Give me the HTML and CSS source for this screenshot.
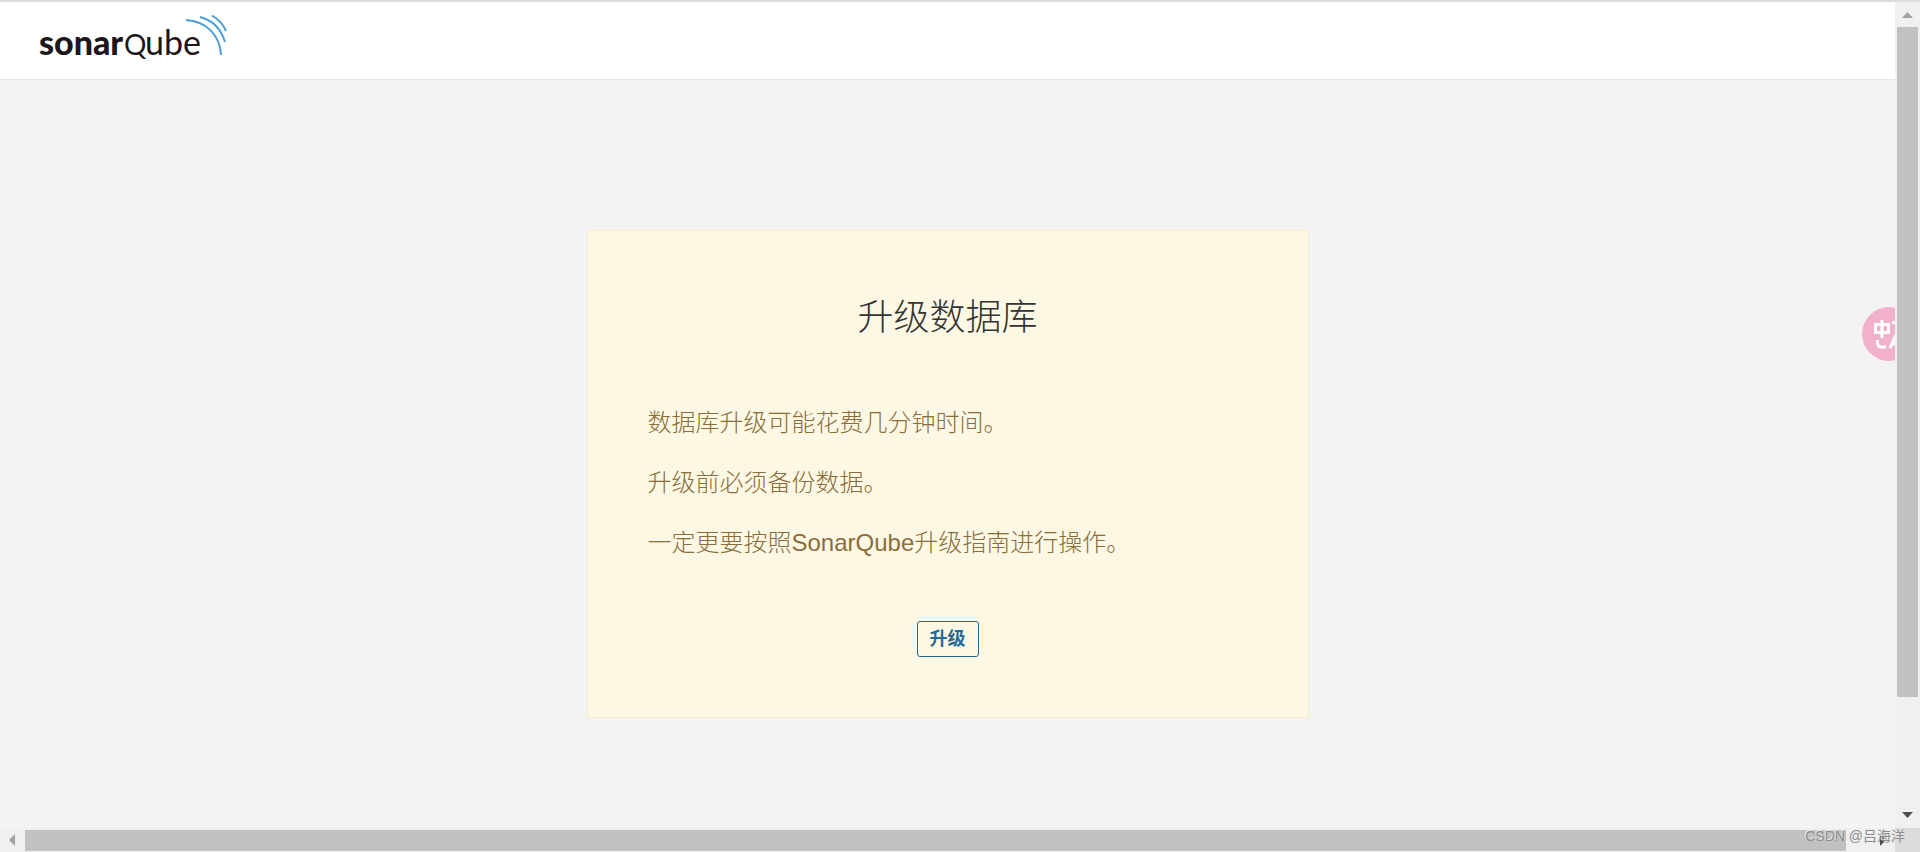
FILE: index.html
```html
<!DOCTYPE html>
<html lang="zh-CN">
<head>
<meta charset="utf-8">
<title>SonarQube</title>
<link rel="stylesheet" href="styles.css">
</head>
<body>
<div class="shell">
  <div class="viewport">
    <header class="navbar">
      <a class="brand" href="#" aria-label="SonarQube">
        <svg class="logo" width="190" height="50" viewBox="0 0 190 50">
          <text class="logo-bold" x="0" y="41">sonar</text>
          <text class="logo-q" x="85" y="41">Q</text>
          <text class="logo-thin" x="106" y="41">ube</text>
          <g class="logo-waves">
            <path d="M147 6C167 7 181 21 182 41"/>
            <path d="M161 3C173 6 182 15 186 28"/>
            <path d="M173 1.500C179 5 184 10 187 17"/>
          </g>
        </svg>
      </a>
    </header>
    <main class="content">
      <section class="notice">
        <h1 class="notice-title">升级数据库</h1>
        <div class="notice-body">
          <p>数据库升级可能花费几分钟时间。</p>
          <p>升级前必须备份数据。</p>
          <p>一定更要按照SonarQube升级指南进行操作。</p>
        </div>
        <button class="button" type="button">升级</button>
      </section>
    </main>
    <button class="translate" type="button" aria-label="翻译">
      <svg width="54" height="54" viewBox="0 0 54 54">
        <g fill="none" stroke="#fff" stroke-width="3">
          <path d="M13.500 17.500H26.500V25.500H13.500ZM20 13V31"/>
          <path d="M15.500 33V36Q15.500 40 20 40H24"/>
          <path d="M28 41L34 28L40 41M30 37H38M30 15.500H37V22"/>
        </g>
      </svg>
    </button>
  </div>
  <div class="bar bar-y">
    <svg class="arrow" width="25" height="25" viewBox="0 0 25 25"><path fill="#a3a3a3" d="M12.500 10L18 16H7Z"/></svg>
    <div class="track-y"><div class="thumb-y"></div></div>
    <svg class="arrow" width="25" height="25" viewBox="0 0 25 25"><path fill="#505050" d="M7 9H18L12.500 15Z"/></svg>
  </div>
  <div class="bar bar-x">
    <svg class="arrow" width="25" height="24" viewBox="0 0 25 24"><path fill="#a3a3a3" d="M9 12L15 6V18Z"/></svg>
    <div class="track-x"><div class="thumb-x"></div></div>
    <svg class="arrow" width="25" height="24" viewBox="0 0 25 24"><path fill="#505050" d="M10 6V18L16 12Z"/></svg>
  </div>
  <div class="corner"></div>
  <div class="watermark">CSDN @吕海洋</div>
</div>
</body>
</html>
```
FILE: styles.css
```css
* {
  box-sizing: border-box;
}

body {
  margin: 0;
  font-family: "Liberation Sans", "Noto Sans CJK SC", sans-serif;
  background: #f3f3f3;
}

.shell {
  position: relative;
  display: grid;
  grid-template-columns: minmax(0, 1fr) 25px;
  grid-template-rows: minmax(0, 1fr) 24px;
  height: 100vh;
  border-top: 2px solid #dcdcdc;
}

.viewport {
  position: relative;
  overflow: hidden;
}

.navbar {
  padding: 12px 39px 15px;
  border-bottom: 1px solid #e6e6e6;
  background: #fff;
}

.brand,
.logo {
  display: block;
  width: 190px;
}

.logo {
  overflow: visible;
  font-family: Lato, sans-serif;
  fill: #1b171b;
}

.logo-bold {
  font-size: 34px;
  font-weight: 900;
}

.logo-q {
  font-size: 28px;
}

.logo-thin {
  font-size: 34px;
}

.logo-waves {
  fill: none;
  stroke: #4b9fd5;
  stroke-width: 2;
}

.content {
  display: flex;
  justify-content: center;
  padding: 150px 24px;
}

.notice {
  display: flex;
  flex-direction: column;
  align-items: center;
  gap: 60px;
  width: 100%;
  max-width: 722px;
  padding: 60px;
  border: 1px solid #faebcc;
  background: #fdf8e4;
}

.notice-title {
  margin: 0;
  font-size: 36px;
  font-weight: 300;
  line-height: 54px;
  color: #333;
}

.notice-body {
  display: flex;
  flex-direction: column;
  gap: 24px;
  width: 100%;
  font-size: 24px;
  font-weight: 300;
  line-height: 36px;
  color: #8a6d3b;
}

.notice-body p {
  margin: 0;
}

.button {
  height: 36px;
  padding: 1px 12px 0;
  border: 1px solid #236a97;
  border-radius: 3px;
  background: transparent;
  color: #236a97;
  font: bold 18px/33px "Liberation Sans", "Noto Sans CJK SC", sans-serif;
}

.translate {
  position: absolute;
  top: 305px;
  right: -21px;
  width: 54px;
  height: 54px;
  padding: 0;
  border: 0;
  border-radius: 50%;
  background: #f1b0cb;
}

.bar {
  display: flex;
  background: #f0f0f0;
}

.bar-y {
  flex-direction: column;
}

.arrow {
  display: block;
  flex: none;
}

.track-y {
  flex: 1;
  padding: 0 2px;
}

.thumb-y {
  height: 86.4%;
  background: #c1c1c1;
}

.track-x {
  flex: 1;
  padding: 2px 0 1px;
}

.thumb-x {
  width: 98.7%;
  height: 100%;
  background: #c1c1c1;
}

.corner {
  background: #dcdcdc;
}

.watermark {
  position: absolute;
  right: 15px;
  bottom: 4px;
  font-size: 14px;
  line-height: 24px;
  color: #8e8e8e;
  text-shadow: -1px -1px 0 #e8e8e8;
}
```
